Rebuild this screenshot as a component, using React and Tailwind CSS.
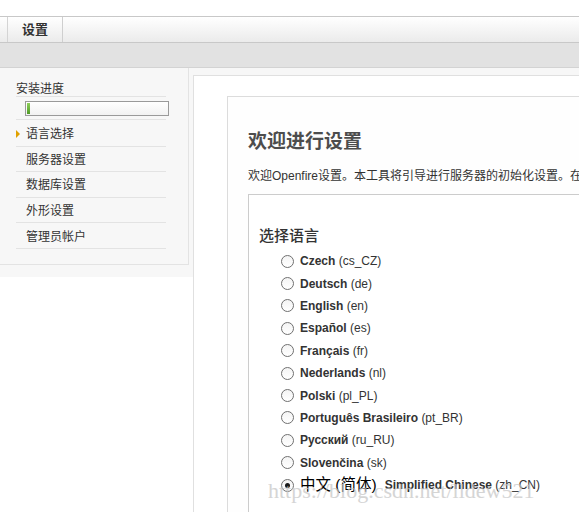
const steps = ["语言选择", "服务器设置", "数据库设置", "外形设置", "管理员帐户"];

const languages = [
  ["Czech", "(cs_CZ)"],
  ["Deutsch", "(de)"],
  ["English", "(en)"],
  ["Español", "(es)"],
  ["Français", "(fr)"],
  ["Nederlands", "(nl)"],
  ["Polski", "(pl_PL)"],
  ["Português Brasileiro", "(pt_BR)"],
  ["Русский", "(ru_RU)"],
  ["Slovenčina", "(sk)"],
];

const Radio = ({ checked }) => (
  <span className="w-[13px] h-[13px] rounded-full border border-[#707070] bg-linear-to-b from-[#f4f4f4] to-white flex items-center justify-center shrink-0">
    {checked && <span className="w-[5px] h-[5px] rounded-full bg-[#1a1a1a]" />}
  </span>
);

const Sidebar = () => (
  <div className="w-[193px] bg-[#f7f7f7] pb-[12px] shrink-0">
    <div className="w-[189px] border-r border-b border-[#e3e3e3] pt-[13px] pb-[15px] pl-[16px]">
      <div className="w-[150px]">
        <div className="h-[16px] pt-[1px] leading-[15px] border-b border-[#e3e3e3] text-[12px] text-[#333]">
          安装进度
        </div>
        <div className="h-[23px] pt-[4px] border-b border-[#e3e3e3]">
          <div className="ml-[9px] w-[144px] h-[15px] border border-[#9a9a9a] bg-linear-to-b from-white to-[#f2f2f2] flex p-[1px]">
            <div className="w-[3px] h-full bg-linear-to-b from-[#8fd05a] to-[#4f9a25]" />
          </div>
        </div>
        {steps.map((s, i) => (
          <div
            key={s}
            className={`${i === 0 ? "h-[26.5px]" : "h-[25.6px]"} pt-[2px] border-b border-[#e3e3e3] flex items-center relative text-[12px] text-[#333]`}
          >
            {i === 0 && (
              <span className="absolute left-0 w-0 h-0 border-y-[4px] border-y-transparent border-l-[4px] border-l-[#e0a100]" />
            )}
            <span className="pl-[10px]">{s}</span>
          </div>
        ))}
      </div>
    </div>
  </div>
);

export default function App() {
  return (
    <div
      className="w-[579px] h-[512px] overflow-hidden bg-white relative"
      style={{ fontFamily: "'Liberation Sans', 'Noto Sans CJK SC', sans-serif" }}
    >
      <div className="h-[16px]" />
      {/* top tabs */}
      <div className="h-[27px] border-y border-[#c8c8c8] bg-linear-to-b from-white to-[#ebebeb] flex">
        <div className="w-[8px] border-r border-[#d4d4d4]" />
        <div className="w-[55px] border-r border-[#cfcfcf] flex items-center justify-center text-[13px] font-bold text-[#333]">
          设置
        </div>
      </div>
      <div className="h-[25px] bg-[#e2e2e2] border-b border-[#d3d3d3]" />

      <div className="flex items-start h-[444px]">
        <Sidebar />
        <div className="flex-1 h-full flex flex-col bg-[#f7f7f7] pt-[7px]">
          <div className="flex-1 bg-white border-t border-l border-[#e0e0e0] pt-[20px] pl-[33px]">
            <div className="h-full border-t border-l border-[#dcdcdc] bg-[#fefefe] pt-[33px] pl-[20px]">
              <h1 className="text-[19px] leading-[24px] font-bold text-[#4d4d4d] whitespace-nowrap">
                欢迎进行设置
              </h1>
              <p className="mt-[14px] text-[12px] leading-[16px] text-[#333] whitespace-nowrap">
                欢迎Openfire设置。本工具将引导进行服务器的初始化设置。在开始之前请选择您需要的语言。
              </p>
              <div className="mt-[10px] h-[400px] border-t border-l border-[#cccccc] bg-white pt-[31px] pl-[10px]">
                <div className="text-[15px] leading-[20px] font-medium text-[#333]">选择语言</div>
                <div className="mt-[4px] pl-[22px]">
                  {languages.map(([name, code]) => (
                    <div key={name} className="h-[22.4px] flex items-center gap-[6px] text-[12px] text-[#333] whitespace-nowrap">
                      <Radio />
                      <span>
                        <b>{name}</b> {code}
                      </span>
                    </div>
                  ))}
                  <div className="h-[22.4px] flex items-center gap-[6px] text-[12px] text-[#333] whitespace-nowrap">
                    <Radio checked />
                    <span className="text-[15.5px] text-black">中文 (简体)</span>
                    <span className="ml-[2px]">
                      <b>Simplified Chinese</b> (zh_CN)
                    </span>
                  </div>
                </div>
              </div>
            </div>
          </div>
        </div>
      </div>

      {/* watermark */}
      <div
        className="absolute left-[268px] top-[478px] text-[22px] leading-[26px] text-[#c4c4c4] opacity-70 whitespace-nowrap pointer-events-none"
        style={{ fontFamily: "'Liberation Serif', serif" }}
      >
        https://blog.csdn.net/lldew521
      </div>
    </div>
  );
}
